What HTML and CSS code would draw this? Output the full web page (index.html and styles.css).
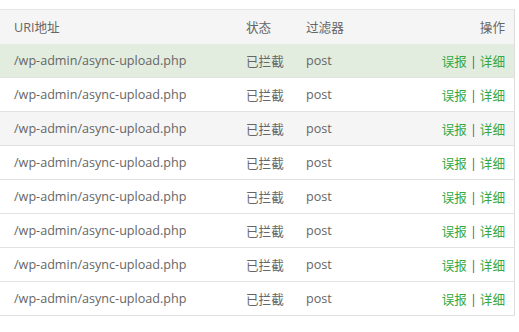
FILE: index.html
```html
<!DOCTYPE html>
<html>
<head>
<meta charset="utf-8">
<link rel="stylesheet" href="styles.css">
</head>
<body>
<table class="grid">
  <colgroup>
    <col class="c-uri"><col class="c-status"><col class="c-filter"><col class="c-op">
  </colgroup>
  <thead>
    <tr><th>URI地址</th><th>状态</th><th>过滤器</th><th class="op">操作</th></tr>
  </thead>
  <tbody>
    <tr class="hover"><td>/wp-admin/async-upload.php</td><td>已拦截</td><td>post</td><td class="op"><a>误报</a><span class="sep">|</span><a>详细</a></td></tr>
    <tr><td>/wp-admin/async-upload.php</td><td>已拦截</td><td>post</td><td class="op"><a>误报</a><span class="sep">|</span><a>详细</a></td></tr>
    <tr class="stripe"><td>/wp-admin/async-upload.php</td><td>已拦截</td><td>post</td><td class="op"><a>误报</a><span class="sep">|</span><a>详细</a></td></tr>
    <tr><td>/wp-admin/async-upload.php</td><td>已拦截</td><td>post</td><td class="op"><a>误报</a><span class="sep">|</span><a>详细</a></td></tr>
    <tr><td>/wp-admin/async-upload.php</td><td>已拦截</td><td>post</td><td class="op"><a>误报</a><span class="sep">|</span><a>详细</a></td></tr>
    <tr><td>/wp-admin/async-upload.php</td><td>已拦截</td><td>post</td><td class="op"><a>误报</a><span class="sep">|</span><a>详细</a></td></tr>
    <tr><td>/wp-admin/async-upload.php</td><td>已拦截</td><td>post</td><td class="op"><a>误报</a><span class="sep">|</span><a>详细</a></td></tr>
    <tr><td>/wp-admin/async-upload.php</td><td>已拦截</td><td>post</td><td class="op"><a>误报</a><span class="sep">|</span><a>详细</a></td></tr>
  </tbody>
</table>
</body>
</html>
```
FILE: styles.css
```css
html, body { margin: 0; padding: 0; background: #fff; }
body { padding-top: 9px; font-family: "Open Sans", "Noto Sans CJK SC", sans-serif; font-size: 12.6px; color: #666; }
.grid { width: 515px; border-collapse: collapse; table-layout: fixed; border-top: 1px solid #e6e6e6; border-right: 1px solid #dddddd; }
.c-uri { width: 232px; }
.c-status { width: 60px; }
.c-filter { width: 100px; }
.grid th, .grid td { height: 34px; padding: 0 0 0 14px; text-align: left; font-weight: normal; white-space: nowrap; border-bottom: 1px solid #e2e2e2; box-sizing: border-box; }
.grid th { background: #f5f5f5; color: #666; border-bottom: none; }
.grid .op { text-align: right; padding-right: 9px; }
.grid tr.hover td { background: #e2ede0; }
.grid tr.stripe td { background: #f5f5f5; }
.grid a { color: #36a843; }
.sep { margin: 0 3px; color: #555; }
```
